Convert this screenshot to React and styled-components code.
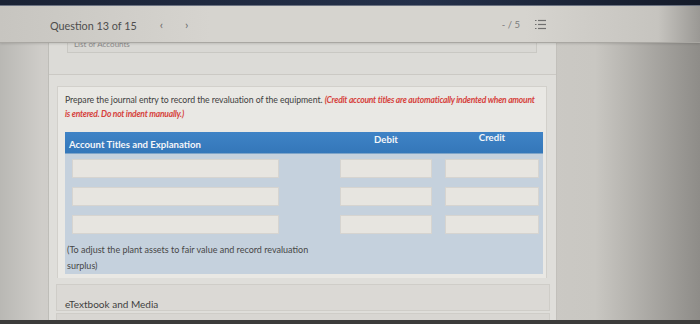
import styled, { createGlobalStyle } from "styled-components"

const GlobalStyle = createGlobalStyle`
  html, body {
    margin: 0;
    padding: 0;
    background: #c9c7c2;
  }
  #root {
    width: 700px;
    height: 324px;
    overflow: hidden;
  }
`

const debitRows = [0, 1, 2]

export default function App() {
  return (
    <>
      <GlobalStyle />
      <Page>
        <TopStrip />
        <Header>
          <QuestionLabel>Question 13 of 15</QuestionLabel>
          <Arrow>‹</Arrow>
          <Arrow $gap={22}>›</Arrow>
          <HeaderRight>
            <Score>- / 5</Score>
            <ListIcon width="11" height="11" viewBox="0 0 11 11">
              <g stroke="#6f6f6f" strokeWidth="1.2">
                <line x1="0" y1="1.5" x2="1.5" y2="1.5" />
                <line x1="3" y1="1.5" x2="11" y2="1.5" />
                <line x1="0" y1="5.5" x2="1.5" y2="5.5" />
                <line x1="3" y1="5.5" x2="11" y2="5.5" />
                <line x1="0" y1="9.5" x2="1.5" y2="9.5" />
                <line x1="3" y1="9.5" x2="11" y2="9.5" />
              </g>
            </ListIcon>
          </HeaderRight>
        </Header>
        <Body>
          <Gutter />
          <Panel>
            <TopSection>
              <AccountsCard>
                <CutText>List of Accounts</CutText>
              </AccountsCard>
            </TopSection>
            <QuestionCard>
              <Prompt>
                Prepare the journal entry to record the revaluation of the equipment.{" "}
                <Hint>
                  (Credit account titles are automatically indented when amount
                  <br />
                  is entered. Do not indent manually.)
                </Hint>
              </Prompt>
              <Table>
                <HeadRow>
                  <HeadCell>Account Titles and Explanation</HeadCell>
                  <span />
                  <HeadCell $center>Debit</HeadCell>
                  <span />
                  <HeadCell $center $up>Credit</HeadCell>
                </HeadRow>
                <Rows>
                  {debitRows.map((r) => (
                    <EntryRow key={r}>
                      <Field />
                      <span />
                      <Field />
                      <span />
                      <Field />
                    </EntryRow>
                  ))}
                </Rows>
                <Note>
                  (To adjust the plant assets to fair value and record revaluation
                  <br />
                  surplus)
                </Note>
              </Table>
            </QuestionCard>
            <MediaBox>
              <MediaLabel>eTextbook and Media</MediaLabel>
            </MediaBox>
            <NextBox />
          </Panel>
          <RightArea />
        </Body>
        <BottomStrip />
      </Page>
    </>
  )
}

const Page = styled.div`
  width: 700px;
  height: 324px;
  display: flex;
  flex-direction: column;
  font-family: Lato, "Open Sans", sans-serif;
  background: linear-gradient(90deg, #b9b8b4 0%, #cfcdc9 6%, #d3d1cc 50%, #c9c7c2 85%, #8e8c88 100%);
`

const TopStrip = styled.div`
  flex-shrink: 0;
  height: 5px;
  background: linear-gradient(90deg, #1a2234, #24304a 60%, #151b29);
  border-bottom: 1px solid #6c7383;
`

const Header = styled.div`
  flex-shrink: 0;
  height: 36px;
  display: flex;
  align-items: center;
  padding-left: 50px;
  padding-right: 154px;
  background: linear-gradient(90deg, #c7c5c0 0%, #d6d4cf 30%, #d6d4cf 75%, #c6c4bf 94%, #9a9894 100%);
  border-bottom: 1px solid #a9a7a2;
  box-shadow: 0 1px 2px rgba(0, 0, 0, 0.12);
  position: relative;
  z-index: 2;
`

const QuestionLabel = styled.span`
  font-size: 10.8px;
  color: #4d4d4d;
  padding-top: 3px;
`

const Arrow = styled.span`
  font-size: 12px;
  color: #6a6a6a;
  margin-left: ${(p) => p.$gap || 23}px;
  padding-top: 1px;
`

const HeaderRight = styled.div`
  margin-left: auto;
  display: flex;
  align-items: center;
  gap: 15px;
`

const Score = styled.span`
  font-size: 9.5px;
  color: #7b7b7b;
`

const ListIcon = styled.svg`
  display: block;
`

const Body = styled.div`
  flex: 1;
  display: flex;
  min-height: 0;
  overflow: hidden;
`

const Gutter = styled.div`
  width: 48px;
  border-right: 1px solid #bebdb8;
`

const Panel = styled.div`
  width: 508px;
  display: flex;
  flex-direction: column;
  background: #dfdeda;
  border-right: 1px solid #c2c0bb;
  padding-left: 8px;
  box-sizing: border-box;

  & > * {
    flex-shrink: 0;
  }
`

const TopSection = styled.div`
  height: 31px;
  margin-left: -8px;
  padding-left: 18px;
  padding-right: 19px;
  border-bottom: 1px solid #cbc9c4;
  background: #dcdbd7;
`

const AccountsCard = styled.div`
  height: 9px;
  overflow: hidden;
  background: #d9d8d4;
  border: 1px solid #c9c8c3;
  border-top: none;
  padding-left: 6px;
`

const CutText = styled.div`
  font-size: 8px;
  line-height: 10px;
  color: #8a8a8a;
  margin-top: -4px;
`

const QuestionCard = styled.div`
  margin-top: 11px;
  margin-right: 9px;
  background: #e9e8e4;
  border: 1px solid #d2d0cb;
  border-bottom: none;
  padding: 6px 3px 4px 7px;
`

const Prompt = styled.p`
  margin: 0 0 11px 0;
  font-size: 8.7px;
  line-height: 14px;
  color: #404040;
  letter-spacing: -0.05px;
  white-space: nowrap;
`

const Hint = styled.span`
  color: #d6413b;
  font-weight: 700;
  font-style: italic;
  font-size: 8.5px;
  letter-spacing: -0.22px;
`

const Table = styled.div`
  background: #c5d1dd;
`

const gridCols = `
  display: grid;
  grid-template-columns: 207px 61px 92px 13px 94px;
  padding-left: 7px;
`

const HeadRow = styled.div`
  ${gridCols}
  height: 21px;
  align-items: center;
  background: linear-gradient(180deg, #3f83c6, #3477b9);
  border-bottom: 1px solid #7ea4c8;
`

const HeadCell = styled.span`
  font-size: 9.6px;
  font-weight: 700;
  color: #f4f6f9;
  white-space: nowrap;
  text-align: ${(p) => (p.$center ? "center" : "left")};
  margin-left: ${(p) => (p.$center ? 0 : -3)}px;
  transform: translateY(${(p) => (p.$center ? (p.$up ? -5 : -3) : 2)}px);
`

const Rows = styled.div`
  display: flex;
  flex-direction: column;
  gap: 9px;
  padding-top: 5px;
`

const EntryRow = styled.div`
  ${gridCols}
`

const Field = styled.div`
  height: 19px;
  background: #e7e5e0;
  border: 1px solid #d6d4d0;
  box-sizing: border-box;
`

const Note = styled.div`
  padding: 8px 0 0 2px;
  font-size: 9px;
  line-height: 16px;
  color: #474747;
`

const MediaBox = styled.div`
  margin-top: 6px;
  margin-left: -1px;
  margin-right: 6px;
  height: 27px;
  display: flex;
  align-items: flex-end;
  padding: 0 0 0 8px;
  background: #dbd9d5;
  border: 1px solid #cfcdc8;
  box-sizing: border-box;
`

const MediaLabel = styled.span`
  font-size: 10px;
  color: #3f3f3f;
`

const NextBox = styled.div`
  margin-top: 2px;
  margin-left: -1px;
  margin-right: 6px;
  height: 10px;
  background: #d8d6d2;
  border: 1px solid #cfcdc8;
`

const RightArea = styled.div`
  flex: 1;
`

const BottomStrip = styled.div`
  flex-shrink: 0;
  height: 4px;
  background: #3c3b3a;
`
